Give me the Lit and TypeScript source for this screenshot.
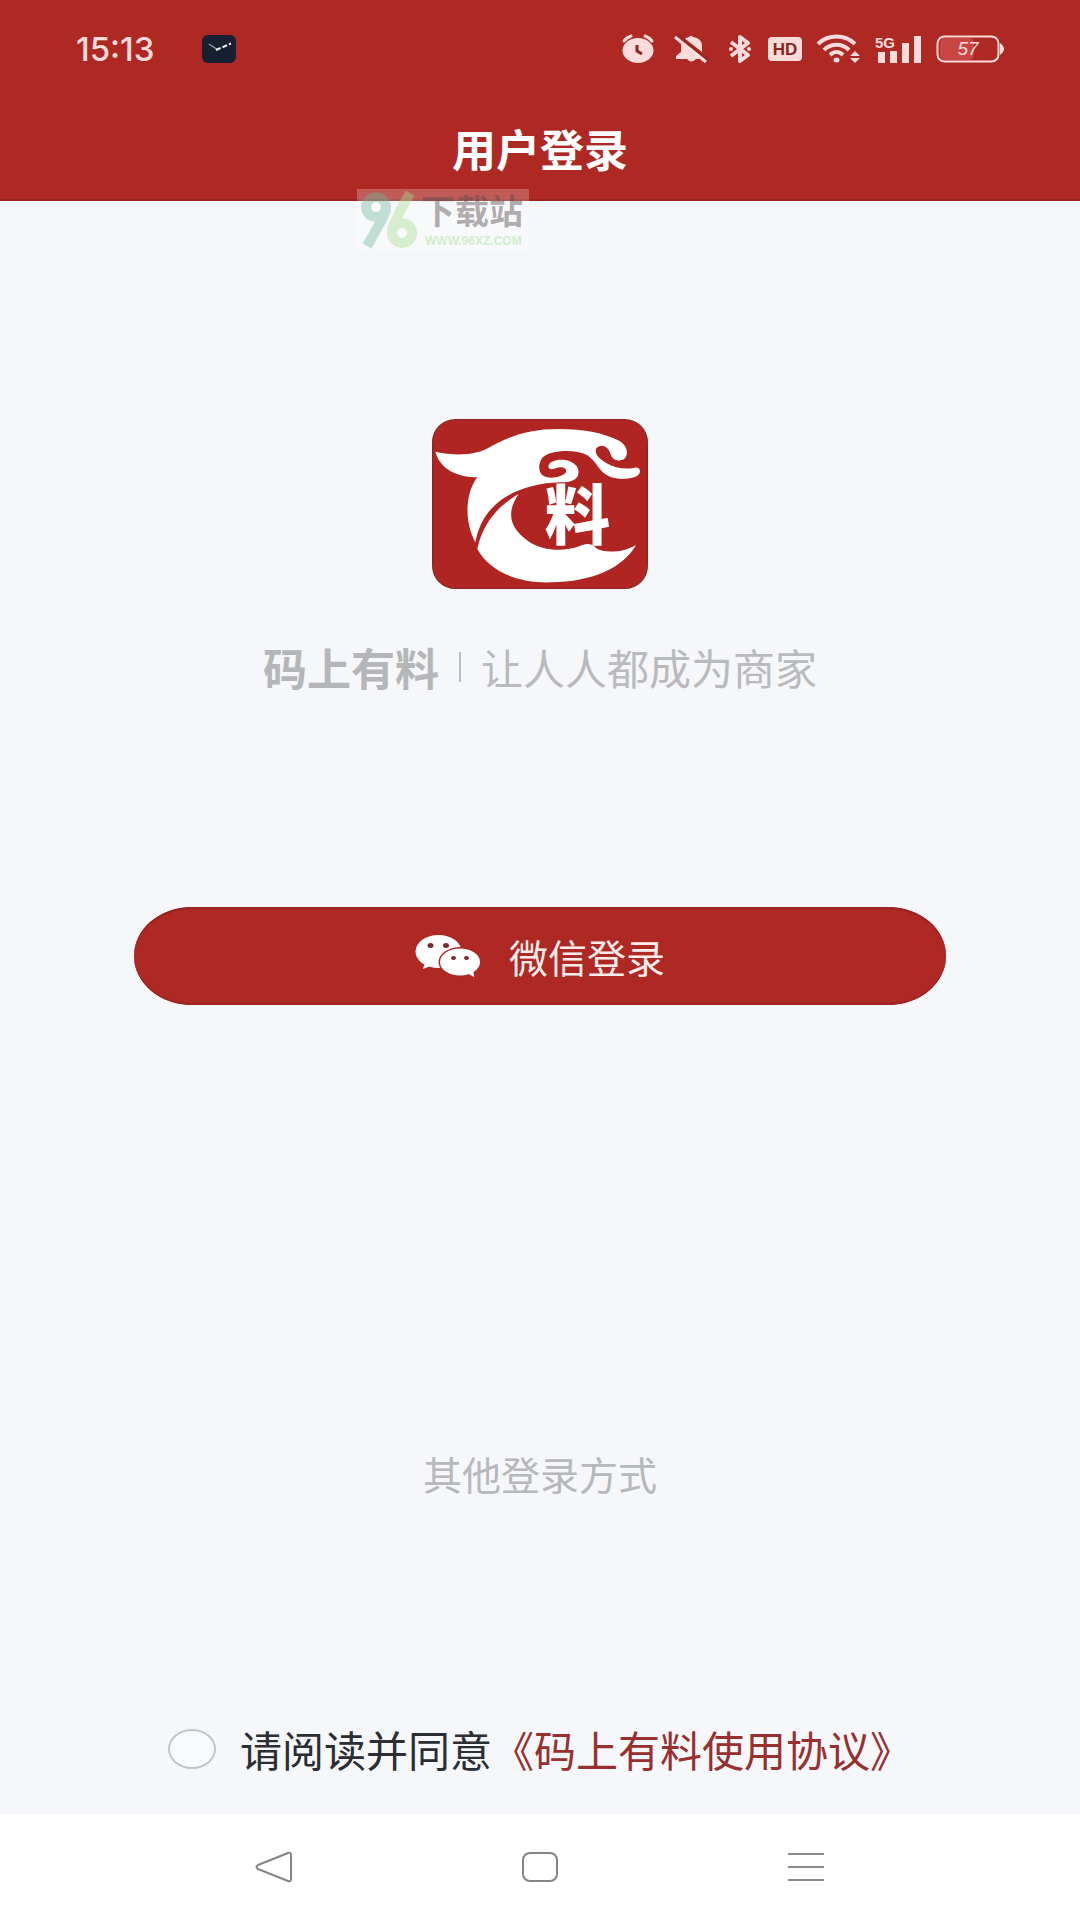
import { LitElement, html, css } from "lit";
import { customElement, state } from "lit/decorators.js";

@customElement("status-bar")
class StatusBar extends LitElement {
  static styles = css`
    :host {
      display: flex;
      align-items: center;
      justify-content: space-between;
      height: 98px;
      padding: 0 76px;
      color: #fbdcda;
      box-sizing: border-box;
    }
    .left,
    .right {
      display: flex;
      align-items: center;
    }
    .left {
      gap: 46px;
    }
    .right {
      gap: 14px;
    }
    .time {
      font: 500 33px/40px Inter, sans-serif;
    }
    svg {
      display: block;
    }
    .label {
      font-family: "Liberation Sans", sans-serif;
      font-weight: 700;
    }
  `;

  render() {
    return html`
      <div class="left">
        <span class="time">15:13</span>
        <svg width="36" height="30" viewBox="0 0 36 30" aria-hidden="true">
          <rect x="1" y="1" width="34" height="28" rx="6" fill="#172033" />
          <path d="M8 10L17 16" fill="none" stroke="#8fa0a8" stroke-width="1.500" />
          <path d="M15 16L30 9.500" fill="none" stroke="#e8eeee" stroke-width="2" stroke-dasharray="5 2" />
        </svg>
      </div>
      <div class="right">
        <svg width="38" height="30" viewBox="0 0 38 30" fill="none" stroke="currentColor" aria-hidden="true">
          <ellipse cx="18" cy="16.500" rx="15.500" ry="12.500" fill="currentColor" stroke="none" />
          <path d="M4 7C6 4.500 8 3 11 2M25 2C28 3 30 4.500 32 7" stroke-width="3" stroke-linecap="round" />
          <path d="M17 11V17L22 20" stroke="#8a2422" stroke-width="3" />
        </svg>
        <svg width="40" height="30" viewBox="0 0 40 30" aria-hidden="true">
          <path
            d="M4 25V22L9 18V11C9 6 13 4 17 3Q19 .5 21 3C27 4 30 7 30 12V18L34 22V25H24Q19 30 15 25Z"
            fill="currentColor"
          />
          <path d="M5 1L37 26" stroke="#9c2522" stroke-width="4" />
          <path d="M3 3L34 28" stroke="currentColor" stroke-width="3" />
        </svg>
        <svg width="28" height="30" viewBox="0 0 28 30" fill="none" aria-hidden="true">
          <path d="M5 8L22 21L14 27V3L22 9L5 22" stroke="currentColor" stroke-width="4" stroke-linejoin="round" />
          <circle cx="5" cy="15" r="2" fill="currentColor" />
          <circle cx="23" cy="15" r="2" fill="currentColor" />
        </svg>
        <svg width="34" height="30" viewBox="0 0 34 30" role="img" aria-label="HD">
          <rect x="0" y="3" width="34" height="24" rx="4" fill="currentColor" />
          <text class="label" x="17" y="21" font-size="17" text-anchor="middle" fill="#8a2422">HD</text>
        </svg>
        <svg width="44" height="30" viewBox="0 0 44 30" fill="none" stroke="currentColor" stroke-width="4" aria-hidden="true">
          <path d="M2 10C12 0 29 0 39 10M8 16C15 9 26 9 33 16M14 21C18 17 23 17 27 21" />
          <ellipse cx="20.500" cy="26" rx="3" ry="2.500" fill="currentColor" stroke="none" />
          <path d="M34 22L39 17L44 22ZM34 24H44L39 29Z" fill="currentColor" stroke="none" />
        </svg>
        <svg width="48" height="30" viewBox="0 0 48 30" fill="currentColor" role="img" aria-label="5G">
          <text class="label" x="1" y="14" font-size="15">5G</text>
          <path d="M4 18H11V29H4ZM16 17H23V29H16ZM28 9H35V29H28ZM40 2H47V29H40Z" />
        </svg>
        <svg width="68" height="30" viewBox="0 0 68 30" role="img" aria-label="57%">
          <rect x="4" y="4" width="34" height="22" rx="5" fill="#c74542" />
          <rect x="1.500" y="2.500" width="61" height="25" rx="7" fill="none" stroke="currentColor" stroke-width="2" />
          <path d="M64 9Q68 12 68 15Q68 18 64 21Z" fill="currentColor" />
          <text x="32" y="21" font-size="19" font-style="italic" font-family="Liberation Sans" text-anchor="middle" fill="currentColor">57</text>
        </svg>
      </div>
    `;
  }
}

@customElement("site-badge")
class SiteBadge extends LitElement {
  static styles = css`
    :host {
      display: flex;
      width: 172px;
      height: 61px;
      box-sizing: border-box;
      padding: 2px 0 0 3px;
      gap: 3px;
      background: rgba(255, 255, 255, 0.24);
    }
    .mark {
      flex: none;
      display: block;
    }
    .words {
      display: flex;
      flex-direction: column;
      align-items: flex-start;
      white-space: nowrap;
    }
    .name {
      font: 700 34px/38px "Noto Sans CJK SC", sans-serif;
      color: rgba(85, 75, 75, 0.45);
    }
    .url {
      padding-left: 4px;
      font: 700 12px/24px "Liberation Sans", sans-serif;
      color: rgba(185, 230, 175, 0.65);
    }
  `;

  render() {
    return html`
      <svg class="mark" width="58" height="58" viewBox="0 0 58 58" fill="none" stroke-width="10" role="img" aria-label="96">
        <g stroke="#6fb89a" opacity="0.4">
          <circle cx="16" cy="16" r="10" />
          <path d="M26 19Q25 24 7 55" />
        </g>
        <g stroke="#a5e08c" opacity="0.4">
          <circle cx="42" cy="42" r="10" />
          <path d="M50 2Q33 32 32 40" />
        </g>
      </svg>
      <div class="words">
        <span class="name">下载站</span>
        <span class="url">WWW.96XZ.COM</span>
      </div>
    `;
  }
}

@customElement("brand-logo")
class BrandLogo extends LitElement {
  static styles = css`
    :host,
    svg {
      display: block;
    }
    .glyph {
      font-family: "Noto Sans CJK SC", sans-serif;
      font-weight: 900;
      font-size: 196px;
    }
  `;

  render() {
    return html`
      <svg width="216" height="170" viewBox="42 42 648 510" role="img" aria-label="码上有料">
        <rect x="44" y="44" width="644" height="506" rx="68" fill="#b02522" stroke="#8d2626" stroke-width="4" />
        <g fill="#fff">
          <path
            d="M52 140C105 152 165 152 205 132C270 95 330 72 420 72C500 72 560 85 605 108C630 124 632 150 618 162
               C600 172 582 164 578 148C572 124 548 114 535 130C528 148 545 162 565 174C590 190 625 194 650 188
               C668 186 672 204 656 214C625 226 585 224 562 208C538 190 530 160 500 147C465 132 395 135 373 158
               C358 180 362 205 378 214C400 224 436 214 444 202C448 188 430 182 412 190C400 196 388 192 392 180
               C400 166 425 162 445 166C478 174 488 196 478 215C468 230 445 232 425 232C360 234 300 250 250 284
               C205 318 182 360 172 412C152 375 145 330 150 290C154 260 164 235 178 217C120 216 68 196 52 140Z"
          />
          <path
            d="M302 267C245 300 195 350 178 432C215 500 300 535 400 532C520 530 615 490 654 420
               C620 442 560 446 535 430C520 412 500 416 484 424C440 440 375 440 330 408
               C290 378 276 350 280 318C283 298 292 282 302 267Z"
          />
          <text class="glyph" x="478" y="402" text-anchor="middle">料</text>
        </g>
      </svg>
    `;
  }
}

@customElement("app-root")
class AppRoot extends LitElement {
  @state() private agreed = false;

  static styles = css`
    :host {
      display: flex;
      flex-direction: column;
      min-height: 100vh;
      background: #f6f7fa;
      font: 400 39px/48px "Noto Sans CJK SC", sans-serif;
    }
    .top {
      position: relative;
      height: 201px;
      box-sizing: border-box;
      background: #ae2824;
      border-bottom: 2px solid #982320;
    }
    .title {
      margin: 22px 0 0;
      text-align: center;
      font-size: 44px;
      line-height: 56px;
      font-weight: 700;
      color: #fff;
    }
    .badge {
      position: absolute;
      left: 357px;
      top: 189px;
    }
    .main {
      flex: 1;
      display: flex;
      flex-direction: column;
      align-items: center;
      padding: 218px 12% 41px;
    }
    .tagline {
      display: flex;
      align-items: center;
      justify-content: center;
      gap: 20px;
      margin: 54px 0 0;
      font-size: 42px;
      color: #b9babd;
      white-space: nowrap;
    }
    .brand {
      font-size: 44px;
      font-weight: 700;
      color: #b5b6b9;
    }
    .rule {
      width: 2px;
      height: 30px;
      background: #bcbdc0;
    }
    button {
      font: inherit;
      border: 0;
      padding: 0;
      background: none;
      cursor: pointer;
    }
    .wechat {
      display: flex;
      align-items: center;
      justify-content: center;
      gap: 28px;
      width: 99%;
      height: 98px;
      margin-top: 216px;
      border-radius: 58px / 49px;
      background: #ae2824;
      box-shadow: inset 0 2px #982320, inset 0 -2px #a02522;
      color: #fdeceb;
    }
    .other {
      margin-top: 444px;
      color: #b7b8bb;
    }
    .agree {
      display: flex;
      align-items: center;
      margin-top: auto;
      font-size: 42px;
      color: #2b2e33;
      white-space: nowrap;
    }
    .check {
      appearance: none;
      width: 48px;
      height: 40px;
      margin: 0 24px 0 0;
      border: 2px solid #c3c4c6;
      border-radius: 50%;
      background: #f9fafb;
    }
    .check:checked {
      background: #ae2824;
    }
    .terms {
      color: #97302f;
      text-decoration: none;
    }
    .nav {
      display: grid;
      grid-template-columns: repeat(3, 1fr);
      height: 106px;
      padding: 0 13%;
      background: #fff;
    }
    .key {
      display: flex;
      align-items: center;
      justify-content: center;
    }
  `;

  private toggle(e: Event) {
    this.agreed = (e.target as HTMLInputElement).checked;
  }

  render() {
    return html`
      <header class="top">
        <status-bar></status-bar>
        <h1 class="title">用户登录</h1>
        <site-badge class="badge"></site-badge>
      </header>
      <main class="main">
        <brand-logo></brand-logo>
        <p class="tagline">
          <span class="brand">码上有料</span>
          <span class="rule"></span>
          <span>让人人都成为商家</span>
        </p>
        <button class="wechat" type="button">
          <svg width="66" height="44" viewBox="0 0 66 44" aria-hidden="true">
            <path d="M10 28L8 35L18 31Z" fill="#fff" />
            <ellipse cx="23.500" cy="17.500" rx="23" ry="16.500" fill="#fff" />
            <ellipse cx="45" cy="28" rx="21.500" ry="15" fill="#ae2824" />
            <path d="M50 38L59 43L58 34Z" fill="#fff" />
            <ellipse cx="45" cy="28" rx="20" ry="13.500" fill="#fff" />
            <g fill="#7c2a2b">
              <ellipse cx="15.500" cy="11.500" rx="3" ry="2.500" />
              <ellipse cx="31" cy="11.500" rx="3" ry="2.500" />
              <ellipse cx="38.500" cy="24" rx="2.500" ry="2" />
              <ellipse cx="51.500" cy="24" rx="2.500" ry="2" />
            </g>
          </svg>
          <span>微信登录</span>
        </button>
        <button class="other" type="button">其他登录方式</button>
        <div class="agree">
          <input class="check" id="agree" type="checkbox" .checked=${this.agreed} @change=${this.toggle} />
          <label for="agree">请阅读并同意</label><a class="terms" href="#terms">《码上有料使用协议》</a>
        </div>
      </main>
      <nav class="nav">
        <button class="key" type="button" aria-label="返回">
          <svg width="38" height="32" viewBox="0 0 38 32" fill="none" stroke="#858585" stroke-width="2">
            <path d="M3 14L33 2Q36 1 36 4V28Q36 31 33 30L3 18Q0 16 3 14Z" />
          </svg>
        </button>
        <button class="key" type="button" aria-label="主页">
          <svg width="38" height="32" viewBox="0 0 38 32" fill="none" stroke="#858585" stroke-width="2">
            <rect x="2" y="2" width="34" height="28" rx="7" />
          </svg>
        </button>
        <button class="key" type="button" aria-label="最近任务">
          <svg width="38" height="32" viewBox="0 0 38 32" fill="none" stroke="#8c8c8c" stroke-width="2">
            <path d="M1 3H37M1 16H37M1 29H37" />
          </svg>
        </button>
      </nav>
    `;
  }
}
